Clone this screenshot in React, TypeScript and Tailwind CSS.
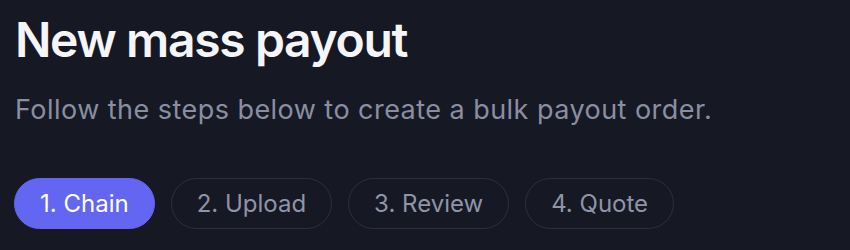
export default function App() {
  const steps = ['1. Chain', '2. Upload', '3. Review', '4. Quote'];
  return (
    <div className="w-[850px] h-[250px] bg-[#161823] px-[14px] pt-4 overflow-hidden" style={{ fontFamily: 'Inter, "Noto Sans", sans-serif' }}>
      <h1 className="pl-[1px] text-[48px] leading-none font-semibold tracking-[-0.028em] text-[#f4f5f8]">New mass payout</h1>
      <p className="mt-[30px] pl-[1px] text-[27px] leading-8 tracking-[0.017em] text-[#8a8ea3]">Follow the steps below to create a bulk payout order.</p>

      {/* Step pills */}
      <div className="mt-[52px] flex items-center gap-4">
        {steps.map((s, i) => (
          <div
            key={s}
            className={
              i === 0
                ? 'h-[51px] px-[25px] flex items-center rounded-full bg-[#6366f0] text-white text-[24px] border border-[#6366f0]'
                : 'h-[51px] px-[25px] flex items-center rounded-full border border-[#2c2f40] text-[#9094a8] text-[24px]'
            }
          >
            {s}
          </div>
        ))}
      </div>
    </div>
  );
}
